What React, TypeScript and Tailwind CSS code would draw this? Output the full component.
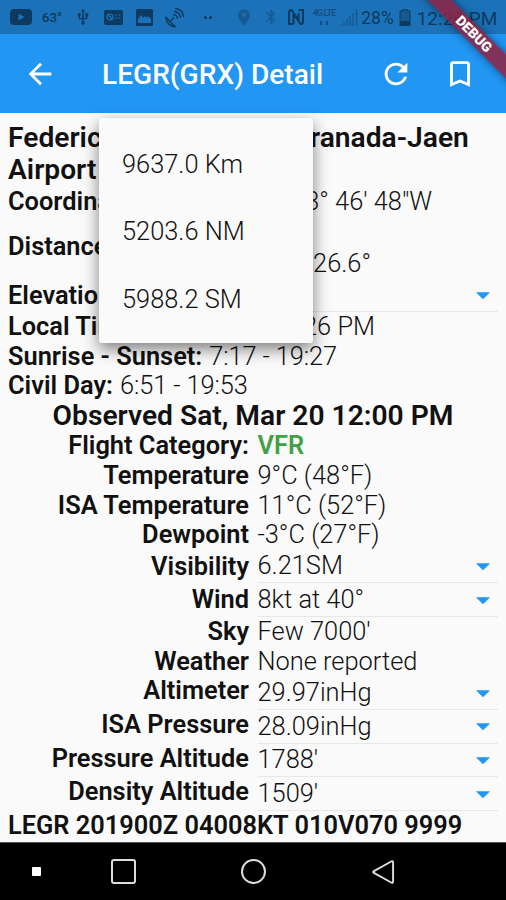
import type { ReactNode } from "react";
import clsx from "clsx";
import {
  MdArrowBack,
  MdArrowDropDown,
  MdBluetooth,
  MdBookmarkBorder,
  MdLocationOn,
  MdRefresh,
  MdUsb,
} from "react-icons/md";

const distances = ["9637.0 Km", "5203.6 NM", "5988.2 SM"];

type Row = {
  label: string;
  value: string;
  dropdown?: boolean;
  green?: boolean;
  height: string;
  shift?: string;
};

const rows: Row[] = [
  { label: "Flight Category:", value: "VFR", green: true, height: "h-[29.6px]" },
  { label: "Temperature", value: "9°C (48°F)", height: "h-[29.6px]" },
  { label: "ISA Temperature", value: "11°C (52°F)", height: "h-[29.6px]" },
  { label: "Dewpoint", value: "-3°C (27°F)", height: "h-[29.6px]" },
  { label: "Visibility", value: "6.21SM", dropdown: true, height: "h-[33.7px]", shift: "pt-[2px]" },
  { label: "Wind", value: "8kt at 40°", dropdown: true, height: "h-[33.7px]", shift: "pt-[2px]" },
  { label: "Sky", value: "Few 7000'", height: "h-[29.6px]" },
  { label: "Weather", value: "None reported", height: "h-[29.6px]" },
  { label: "Altimeter", value: "29.97inHg", dropdown: true, height: "h-[33.7px]" },
  { label: "ISA Pressure", value: "28.09inHg", dropdown: true, height: "h-[33.7px]" },
  { label: "Pressure Altitude", value: "1788'", dropdown: true, height: "h-[33.7px]" },
  { label: "Density Altitude", value: "1509'", dropdown: true, height: "h-[33.7px]" },
];

function Cell({ className, children }: { className: string; children: ReactNode }) {
  return <div className={clsx("flex shrink-0 items-center justify-center", className)}>{children}</div>;
}

function StatusBar() {
  return (
    <div className="flex h-[34px] items-center bg-[#1c72b8] pl-[10px] text-[#0d3a5e]">
      <Cell className="w-[22px]">
        <svg viewBox="0 0 22 16" className="h-4 w-[22px]">
          <rect width="22" height="16" rx="4" fill="currentColor" />
          <path d="M8.5 4.500v7l6-3.500z" fill="#1c72b8" />
        </svg>
      </Cell>
      <Cell className="ml-[9px] w-[22px] pt-[2px] text-[13.500px] font-medium">63°</Cell>
      <Cell className="ml-[11px] w-[18px]">
        <MdUsb size={20} />
      </Cell>
      <Cell className="ml-[12px] w-[19px]">
        <svg viewBox="0 0 19 15" className="h-[15px] w-[19px]">
          <rect width="19" height="15" rx="2" fill="currentColor" />
          <circle cx="6" cy="7" r="3" fill="none" stroke="#1c72b8" strokeWidth="1.200" />
          <path d="M3.500 4l5 6M11 5h2M14.500 5h2M11 8h2M14.500 8h2" stroke="#1c72b8" strokeWidth="1.200" />
        </svg>
      </Cell>
      <Cell className="ml-[12px] w-[18px]">
        <svg viewBox="0 0 17 17" className="size-[17px]">
          <rect width="17" height="17" rx="1.500" fill="currentColor" />
          <path d="M2 14V10l3-4 2 3 2-2 1.500 2 1.500-2 3 3v4z" fill="#1c72b8" />
        </svg>
      </Cell>
      <Cell className="ml-[11px] w-[22px]">
        <svg viewBox="0 0 22 22" className="size-[22px]" fill="none" stroke="currentColor" strokeWidth="1.500">
          <path d="M2 11.500c0 5 4 9 9 9zM6 15.500l4-4" />
          <path d="M9.500 8.500c2 0 4 2 4 4M10 5.500c4 0 6.500 3 6.500 6.500M11 2.500c5 0 8.500 4 8.500 8.500" />
        </svg>
      </Cell>
      <Cell className="ml-[17px] w-[9px] gap-[2px]">
        <i className="size-[3px] shrink-0 rounded-full bg-current" />
        <i className="size-[3px] shrink-0 rounded-full bg-current" />
      </Cell>
      <Cell className="ml-[22px] w-[20px] text-[#175a91]">
        <MdLocationOn size={23} />
      </Cell>
      <Cell className="ml-[8px] w-[18px] text-[#175a91]">
        <MdBluetooth size={20} />
      </Cell>
      <Cell className="ml-[7px] w-[18px]">
        <svg viewBox="0 0 16 16" className="size-4" fill="none" stroke="currentColor" strokeWidth="2">
          <path d="M5.500 15H1V3.500Q1 1 3.500 1L10.500 11V4M5.500 5v10M10.500 1H15v11.500Q15 15 12.500 15L5.500 5" />
        </svg>
      </Cell>
      <Cell className="ml-[9px] w-[20px] flex-col text-[#154f80]">
        <span className="text-[9px] leading-[9px] font-bold tracking-[-0.8px] whitespace-nowrap">4G LTE</span>
        <span className="mt-[3px] flex gap-[4px]">
          <i className="h-[4px] w-[2px] bg-current" />
          <i className="h-[4px] w-[2px] bg-current" />
        </span>
      </Cell>
      <Cell className="ml-[6px] w-[18px] text-[#175a91]">
        <svg viewBox="0 0 18 17" className="h-[17px] w-[18px]" stroke="currentColor" strokeWidth="1.500">
          <path d="M1 17v-2M4 17v-4M7 17v-7M10 17V7M13 17V4M16.500 17V0" />
        </svg>
      </Cell>
      <Cell className="ml-[3px] w-[33px] pt-[3px] text-[17.500px]">28%</Cell>
      <Cell className="ml-[5px] w-[12px]">
        <svg viewBox="0 0 12 17" className="h-[17px] w-[12px]">
          <path d="M4 0h4v2h3v15H1V2h3z" fill="#175a91" stroke="currentColor" />
          <path d="M1 12h10v5H1z" fill="currentColor" />
        </svg>
      </Cell>
      <Cell className="ml-[5px] w-[82px] pt-[3px] text-[19px] whitespace-nowrap">12:26 PM</Cell>
    </div>
  );
}

function AppBar() {
  return (
    <header className="flex h-[79px] items-center bg-[#2196f3] text-white">
      <MdArrowBack size={34} className="ml-[23px] shrink-0" />
      <h1 className="ml-[45px] w-[280px] pt-[2px] text-[28.1px] font-medium whitespace-nowrap">LEGR(GRX) Detail</h1>
      <MdRefresh size={34} className="-ml-[3px] shrink-0" />
      <MdBookmarkBorder size={34} className="ml-[30px] shrink-0" />
    </header>
  );
}

function DropdownArrow() {
  return <MdArrowDropDown size={34} className="-mr-[2px] shrink-0 text-[#2196f3]" />;
}

function Info({ label, value, width }: { label: string; value: string; width?: string }) {
  return (
    <div className="relative flex h-[29.6px]">
      <b className="font-semibold">{label}</b>
      <span
        className={clsx("font-light", width ? "absolute left-0 text-right " + width : "ml-[7px] tracking-[-0.1px]")}
      >
        {value}
      </span>
    </div>
  );
}

function DistanceMenu() {
  return (
    <ul className="absolute top-[118px] left-[99px] h-[225px] w-[214px] rounded-[3px] bg-[#fafafa] pt-[13px] shadow-[0_6px_16px_rgba(0,0,0,0.5)]">
      {distances.map((d) => (
        <li key={d} className="flex h-[67.5px] items-center pl-[23px] font-light">
          {d}
        </li>
      ))}
    </ul>
  );
}

function DebugBanner() {
  return (
    <div className="absolute top-0 right-0 size-[100px] overflow-hidden">
      <div className="absolute top-[25px] -left-[13px] flex h-[17px] w-[160px] rotate-45 items-center justify-center bg-[#8f2240]/85 pl-[2px] text-[14px] font-black text-white shadow-[0_0_8px_rgba(0,0,0,0.5)]">
        DEBUG
      </div>
    </div>
  );
}

export default function App() {
  return (
    <div className="relative h-[900px] w-[506px] overflow-hidden bg-[#fafafa] font-['Roboto',sans-serif] text-[25.4px] leading-[29.6px] text-[#111]">
      <StatusBar />
      <AppBar />
      <main className="h-[729px] overflow-hidden px-2 pt-[8.500px] whitespace-nowrap">
        <h2 className="text-[28.2px] leading-[32.500px] font-semibold">
          Federico Garcia Lorca Granada-Jaen
          <br />
          Airport
        </h2>
        <Info label="Coordinates:" value={`3° 46' 48"W`} width="w-[424px]" />
        <div className="relative flex h-[63px] pt-[16px]">
          <b className="font-semibold">Distance:</b>
          <span className="absolute top-[33px] left-0 w-[363px] text-right font-light">126.6°</span>
        </div>
        <div className="flex h-[33px] items-center">
          <b className="font-semibold">Elevation:</b>
          <div className="ml-[6px] flex h-full flex-1 items-center justify-end border-b border-[#e8e8e8]">
            <DropdownArrow />
          </div>
        </div>
        <Info label="Local Time:" value="8:26 PM" width="w-[367px]" />
        <Info label="Sunrise - Sunset:" value="7:17 - 19:27" />
        <Info label="Civil Day:" value="6:51 - 19:53" />
        <h3 className="h-[30.500px] text-center text-[28.2px] leading-[30px] font-semibold">Observed Sat, Mar 20 12:00 PM</h3>
        {rows.map((r) => (
          <div key={r.label} className={clsx("flex", r.height)}>
            <b className={clsx("w-[241px] shrink-0 text-right font-semibold", r.shift)}>{r.label}</b>
            <div
              className={clsx(
                "ml-[8.500px] flex flex-1 justify-between",
                r.dropdown && "items-center border-b border-[#e8e8e8]",
                r.green ? "font-semibold text-[#43a047]" : "font-light"
              )}
            >
              {r.value}
              {r.dropdown && <DropdownArrow />}
            </div>
          </div>
        ))}
        <p className="font-semibold">LEGR 201900Z 04008KT 010V070 9999</p>
      </main>
      <nav className="flex h-[58px] items-center border-t border-[#555] bg-black text-white">
        <i className="ml-[32px] size-[9px] rounded-[1px] bg-white" />
        <i className="ml-[70px] size-[25px] rounded-[3px] border-2 border-[#ddd]" />
        <i className="ml-[105px] size-[25px] rounded-full border-2 border-[#ddd]" />
        <svg viewBox="0 0 24 26" className="ml-[106px] h-[26px] w-[23px]" fill="none" stroke="#ddd" strokeWidth="2">
          <path d="M20.500 1.800 2 12q-1.500 1 0 2l18.500 10.200q1.500.6 1.500-1V2.800q0-1.600-1.500-1z" />
        </svg>
      </nav>
      <DistanceMenu />
      <DebugBanner />
    </div>
  );
}
